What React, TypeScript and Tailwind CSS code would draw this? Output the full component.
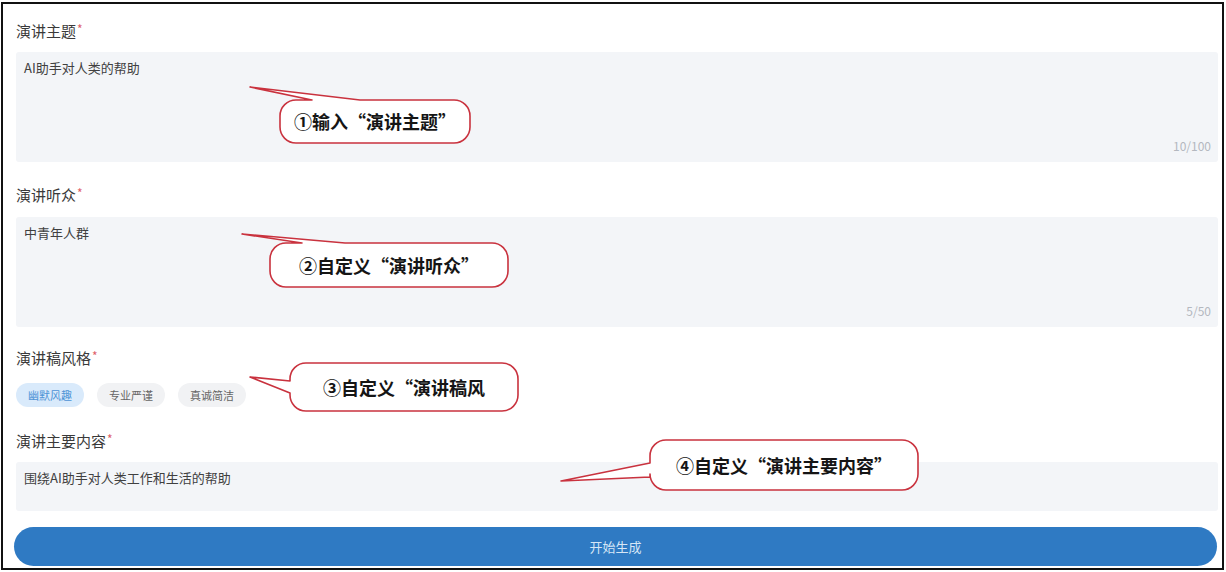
import React from 'react';

const font = { fontFamily: '"Noto Sans CJK SC", "Noto Sans", sans-serif' };

const Label = ({ text, className = '' }: { text: string; className?: string }) => (
  <div className={`h-[22px] flex items-center text-[15px] text-[#3a3a3a] ${className}`}>
    {text}
    <span className="text-[#e0606a] text-[12px] ml-[1px] -mt-[4px]">*</span>
  </div>
);

const Field = ({ value, count, h }: { value: string; count?: string; h: string }) => (
  <div className={`relative bg-[#f3f5f8] rounded-[3px] ${h} px-[8px] pt-[6px]`}>
    <p className="text-[13px] leading-[20px] text-[#404040]">{value}</p>
    {count && (
      <span className="absolute right-[7px] bottom-[7px] text-[12px] text-[#b4b8bf]">{count}</span>
    )}
  </div>
);

const callouts = [
  {
    d: 'M 296 100 L 312 100 L 250 87 L 360 100 L 454 100 A 16 16 0 0 1 470 116 L 470 127 A 16 16 0 0 1 454 143 L 296 143 A 16 16 0 0 1 280 127 L 280 116 A 16 16 0 0 1 296 100 Z',
    box: 'left-[280px] top-[100px] w-[190px] h-[43px]',
    text: '①输入“演讲主题”',
  },
  {
    d: 'M 286 243 L 302 243 L 242 234 L 345 243 L 492 243 A 16 16 0 0 1 508 259 L 508 271 A 16 16 0 0 1 492 287 L 286 287 A 16 16 0 0 1 270 271 L 270 259 A 16 16 0 0 1 286 243 Z',
    box: 'left-[270px] top-[243px] w-[238px] h-[44px]',
    text: '②自定义“演讲听众”',
  },
  {
    d: 'M 306 363 L 502 363 A 16 16 0 0 1 518 379 L 518 395 A 16 16 0 0 1 502 411 L 306 411 A 16 16 0 0 1 290 395 L 290 393 L 250 377 L 290 381 L 290 379 A 16 16 0 0 1 306 363 Z',
    box: 'left-[290px] top-[363px] w-[228px] h-[48px]',
    text: '③自定义“演讲稿风',
  },
  {
    d: 'M 666 440 L 902 440 A 16 16 0 0 1 918 456 L 918 474 A 16 16 0 0 1 902 490 L 666 490 A 16 16 0 0 1 650 474 L 650 477 L 561 481 L 650 463 L 650 456 A 16 16 0 0 1 666 440 Z',
    box: 'left-[650px] top-[440px] w-[268px] h-[50px]',
    text: '④自定义“演讲主要内容”',
  },
];

const App = () => {
  return (
    <div className="relative w-[1226px] h-[572px] bg-white overflow-hidden" style={font}>
      <div className="pt-[2px] pl-[1px]">
        <div className="w-[1223px] h-[568px] border-2 border-[#111] pl-[13px] pr-[4px] pt-[16px]">
          <Label text="演讲主题" />
          <div className="mt-[10px]">
            <Field value="AI助手对人类的帮助" count="10/100" h="h-[110px]" />
          </div>
          <Label text="演讲听众" className="mt-[22px]" />
          <div className="mt-[11px]">
            <Field value="中青年人群" count="5/50" h="h-[110px]" />
          </div>
          <Label text="演讲稿风格" className="mt-[20px]" />
          <div className="mt-[14px] flex gap-[13px]">
            <span className="h-[24px] px-[12px] rounded-full bg-[#d9eafb] text-[#4e93d6] text-[11px] flex items-center">
              幽默风趣
            </span>
            <span className="h-[24px] px-[12px] rounded-full bg-[#f1f2f4] text-[#666] text-[11px] flex items-center">
              专业严谨
            </span>
            <span className="h-[24px] px-[12px] rounded-full bg-[#f1f2f4] text-[#666] text-[11px] flex items-center">
              真诚简洁
            </span>
          </div>
          <Label text="演讲主要内容" className="mt-[23px]" />
          <div className="mt-[10px]">
            <Field value="围绕AI助手对人类工作和生活的帮助" h="h-[49px]" />
          </div>
          <button className="mt-[16px] -ml-[2px] w-[1203px] h-[39px] rounded-full bg-[#2f7ac3] text-[#d6e6f6] text-[13px] flex items-center justify-center">
            开始生成
          </button>
        </div>
      </div>

      <svg className="absolute left-0 top-0 pointer-events-none" width="1226" height="572">
        {callouts.map((c, i) => (
          <path key={i} d={c.d} fill="#ffffff" stroke="#c9323e" strokeWidth="1.6" strokeLinejoin="round" />
        ))}
      </svg>
      {callouts.map((c, i) => (
        <div
          key={i}
          className={`absolute ${c.box} flex items-center justify-center text-[18px] font-bold text-[#151515]`}
        >
          {c.text}
        </div>
      ))}
    </div>
  );
};

export default App;
